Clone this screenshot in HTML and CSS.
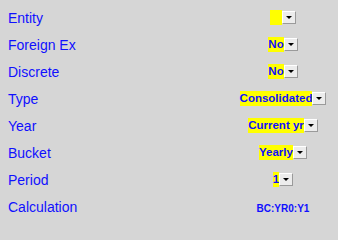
FILE: index.html
```html
<!DOCTYPE html>
<html>
<head>
<meta charset="utf-8">
<link rel="stylesheet" href="styles.css">
</head>
<body>
<div class="form">
  <div class="row"><span class="label">Entity</span><span class="value"><span class="select"><span class="sel-text"></span><span class="sel-btn"></span></span></span></div>
  <div class="row"><span class="label">Foreign Ex</span><span class="value"><span class="select"><span class="sel-text">No</span><span class="sel-btn"></span></span></span></div>
  <div class="row"><span class="label">Discrete</span><span class="value"><span class="select"><span class="sel-text">No</span><span class="sel-btn"></span></span></span></div>
  <div class="row"><span class="label">Type</span><span class="value"><span class="select"><span class="sel-text">Consolidated</span><span class="sel-btn"></span></span></span></div>
  <div class="row"><span class="label">Year</span><span class="value"><span class="select"><span class="sel-text">Current yr</span><span class="sel-btn"></span></span></span></div>
  <div class="row"><span class="label">Bucket</span><span class="value"><span class="select"><span class="sel-text">Yearly</span><span class="sel-btn"></span></span></span></div>
  <div class="row"><span class="label">Period</span><span class="value"><span class="select"><span class="sel-text">1</span><span class="sel-btn"></span></span></span></div>
  <div class="row"><span class="label">Calculation</span><span class="value"><span class="calc">BC:YR0:Y1</span></span></div>
</div>
</body>
</html>
```
FILE: styles.css
```css
body {
  margin: 0;
  background: #d6d6d6;
  font-family: "Liberation Sans", Arial, sans-serif;
}
.form {
  padding: 4px 0 0 8px;
}
.row {
  display: grid;
  grid-template-columns: 1fr 110px;
  height: 27px;
  align-items: center;
}
.label {
  font-size: 14px;
  color: #1010ff;
}
.value {
  display: flex;
  justify-content: center;
}
.select {
  display: inline-flex;
  align-items: flex-start;
}
.sel-text {
  background: #ffff00;
  color: #1010ff;
  font-weight: bold;
  font-size: 11.5px;
  line-height: 15px;
  height: 15px;
}
.sel-text:empty {
  width: 12px;
}
.sel-btn {
  box-sizing: border-box;
  width: 14px;
  height: 13px;
  margin-top: 1px;
  background: #ececec;
  border-top: 1px solid #ffffff;
  border-left: 1px solid #ffffff;
  border-right: 1px solid #9a9a9a;
  border-bottom: 1px solid #9a9a9a;
  display: flex;
  align-items: center;
  justify-content: center;
}
.sel-btn::after {
  content: "";
  border-left: 3px solid transparent;
  border-right: 3px solid transparent;
  border-top: 3px solid #000;
}
.calc {
  color: #1010ff;
  font-weight: bold;
  font-size: 10px;
  margin-top: 4px;
}
```
